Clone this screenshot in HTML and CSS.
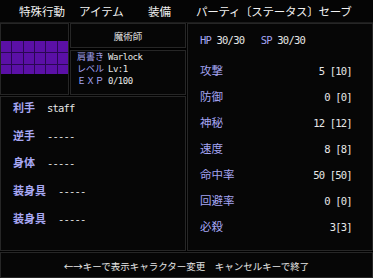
FILE: index.html
```html
<!DOCTYPE html>
<html lang="ja">
<head>
<meta charset="utf-8">
<title>ステータス</title>
<link rel="stylesheet" href="styles.css">
</head>
<body>
<div class="screen">
  <nav class="menu">
    <span class="menu-item m1">特殊行動</span>
    <span class="menu-item m2">アイテム</span>
    <span class="menu-item m3">装備</span>
    <span class="menu-item m4">パーティ〔ステータス〕セーブ</span>
  </nav>
  <div class="main">
    <div class="left-col">
      <div class="top-row">
        <div class="panel portrait">
          <div class="tiles">
            <i></i><i></i><i></i><i></i><i></i><i></i>
            <i></i><i></i><i></i><i></i><i></i><i></i>
            <i></i><i></i><i></i><i></i><i></i><i></i>
          </div>
        </div>
        <div class="name-col">
          <div class="panel name">魔術師</div>
          <div class="panel info">
            <div class="info-row"><span class="lbl">肩書き</span><span class="val">Warlock</span></div>
            <div class="info-row"><span class="lbl">レベル</span><span class="val">Lv:1</span></div>
            <div class="info-row"><span class="lbl">ＥＸＰ</span><span class="val">0/100</span></div>
          </div>
        </div>
      </div>
      <div class="panel equip">
        <div class="equip-row"><span class="elbl">利手</span><span class="eval">staff</span></div>
        <div class="equip-row"><span class="elbl">逆手</span><span class="eval">-----</span></div>
        <div class="equip-row"><span class="elbl">身体</span><span class="eval">-----</span></div>
        <div class="equip-row"><span class="elbl">装身具</span><span class="eval">-----</span></div>
        <div class="equip-row"><span class="elbl">装身具</span><span class="eval">-----</span></div>
      </div>
    </div>
    <div class="panel stats">
      <div class="hpsp"><span class="hl">HP</span> <span class="hv">30/30</span>   <span class="hl">SP</span> <span class="hv">30/30</span></div>
      <div class="stat-list">
        <div class="stat-row"><span class="slbl">攻撃</span><span class="sval">5 [10]</span></div>
        <div class="stat-row"><span class="slbl">防御</span><span class="sval">0 [0]</span></div>
        <div class="stat-row"><span class="slbl">神秘</span><span class="sval">12 [12]</span></div>
        <div class="stat-row"><span class="slbl">速度</span><span class="sval">8 [8]</span></div>
        <div class="stat-row"><span class="slbl">命中率</span><span class="sval">50 [50]</span></div>
        <div class="stat-row"><span class="slbl">回避率</span><span class="sval">0 [0]</span></div>
        <div class="stat-row"><span class="slbl">必殺</span><span class="sval">3[3]</span></div>
      </div>
    </div>
  </div>
  <div class="panel help">←→キーで表示キャラクター変更　キャンセルキーで終了</div>
</div>
</body>
</html>
```
FILE: styles.css
```css
* { box-sizing: border-box; }
html, body { margin: 0; padding: 0; background: #000; }
body {
  font-family: "Noto Sans CJK JP", "Noto Sans", sans-serif;
  color: #e6e6e6;
  width: 373px;
  height: 278px;
  overflow: hidden;
}
.screen {
  display: flex;
  flex-direction: column;
  width: 373px;
  height: 278px;
}
.menu {
  height: 23px;
  display: flex;
  align-items: center;
  padding: 0 0 1px 19px;
  font-size: 11.5px;
  color: #f2f2f2;
  border-bottom: 1px solid #1c1c1c;
  background: #050505;
  white-space: nowrap;
}
.menu-item { flex: none; }
.m1 { width: 60px; }
.m2 { width: 69px; }
.m3 { width: 48px; }
.m4 { letter-spacing: -0.3px; }

.panel {
  background: #060606;
  border: 1px solid #262626;
}
.main {
  display: flex;
  gap: 1px;
  height: 228px;
}
.left-col {
  width: 186px;
  display: flex;
  flex-direction: column;
  gap: 1px;
}
.top-row {
  display: flex;
  gap: 1px;
  height: 72px;
}
.portrait {
  width: 69px;
  padding-top: 17px;
}
.tiles {
  display: grid;
  grid-template-columns: repeat(6, 1fr);
  grid-template-rows: 11px 11px 9px;
  gap: 1px;
  background: #2a0852;
  width: 67px;
}
.tiles i { background: #5b10a6; }
.name-col {
  flex: 1;
  display: flex;
  flex-direction: column;
  gap: 2px;
}
.name {
  height: 25px;
  display: flex;
  align-items: center;
  justify-content: center;
  font-size: 9.5px;
  color: #e0e0e0;
}
.info {
  flex: 1;
  padding: 0 0 0 6px;
  font-size: 9px;
}
.info-row { line-height: 12px; display: flex; gap: 4px; align-items: baseline; }
.lbl { color: #a4a4f2; }
.val {
  color: #e6e6e6;
  font-family: "DejaVu Sans Mono", monospace;
  font-size: 9px;
  letter-spacing: -0.5px;
}

.equip {
  flex: 1;
  padding: 2px 0 0 12px;
  display: flex;
  flex-direction: column;
  gap: 10.7px;
}
.equip-row {
  line-height: 16px;
  display: flex;
  gap: 12px;
  font-size: 11px;
  align-items: baseline;
}
.elbl { color: #a8a8f4; font-weight: bold; }
.eval {
  color: #e6e6e6;
  font-family: "DejaVu Sans Mono", monospace;
  font-size: 10.5px;
  letter-spacing: -0.8px;
}

.stats {
  width: 186px;
  padding: 8px 21px 0 12px;
  font-size: 11.5px;
}
.hpsp {
  line-height: 16px;
  white-space: pre;
  font-family: "DejaVu Sans Mono", monospace;
  font-size: 10.5px;
  letter-spacing: -0.8px;
}
.hl { color: #a4a4f2; }
.hv { color: #e6e6e6; }
.stat-list {
  margin-top: 14px;
  display: flex;
  flex-direction: column;
  gap: 9px;
}
.stat-row {
  display: flex;
  justify-content: space-between;
  align-items: baseline;
  line-height: 16px;
}
.slbl { color: #a4a4f2; }
.sval {
  color: #e6e6e6;
  white-space: pre;
  font-family: "DejaVu Sans Mono", monospace;
  font-size: 10.5px;
  letter-spacing: -0.8px;
  margin-right: -0.8px;
}

.help {
  margin-top: 1px;
  flex: 1;
  display: flex;
  align-items: center;
  justify-content: center;
  font-size: 9.5px;
  color: #e6e6e6;
  white-space: nowrap;
  padding-top: 1px;
}
```
